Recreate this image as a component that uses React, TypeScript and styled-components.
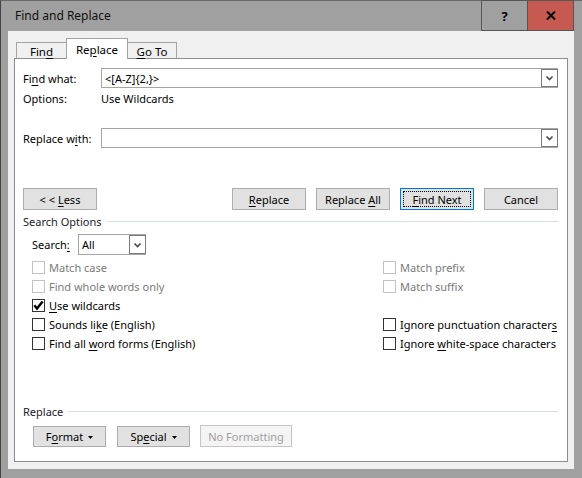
import React from 'react'
import styled, { createGlobalStyle } from 'styled-components'

const GlobalStyle = createGlobalStyle`
  html, body {
    margin: 0;
    padding: 0;
    background: #ffffff;
  }
  body {
    font-family: 'Noto Sans', 'Segoe UI', sans-serif;
    font-size: 11px;
    color: #000;
  }
`

const Window = styled.div`
  width: 582px;
  height: 478px;
  box-sizing: border-box;
  background: #a0a0a0;
  border-left: 1px solid #444;
  border-top: 1px solid #6a6a6a;
  padding: 0 8px 9px 7px;
  display: flex;
  flex-direction: column;
`

const TitleBar = styled.div`
  height: 30px;
  display: flex;
  align-items: stretch;
  padding-left: 7px;
`

const Title = styled.div`
  flex: 1;
  display: flex;
  align-items: center;
  font-size: 12px;
  color: #111;
  padding-bottom: 1px;
`

const CaptionButton = styled.div<{ $close?: boolean }>`
  width: ${p => (p.$close ? '46px' : '47px')};
  box-sizing: border-box;
  margin-top: -1px;
  background: ${p => (p.$close ? '#c75a50' : '#a0a0a0')};
  border: 1px solid #555;
  border-left: ${p => (p.$close ? 'none' : '1px solid #555')};
  display: flex;
  align-items: center;
  justify-content: center;
  font-weight: bold;
  font-size: 13px;
  color: #000;
`

const Client = styled.div`
  flex: 1;
  background: #f0f0f0;
  padding: 7px 6px 7px 6px;
  display: flex;
  flex-direction: column;
`

const TabStrip = styled.div`
  height: 20px;
  display: flex;
  align-items: flex-end;
  padding-left: 2px;
  position: relative;
  z-index: 1;
`

const Tab = styled.div<{ $active?: boolean; $w: number }>`
  width: ${p => p.$w}px;
  box-sizing: border-box;
  height: ${p => (p.$active ? '21px' : '16px')};
  margin-bottom: ${p => (p.$active ? '-1px' : '0')};
  margin-left: -1px;
  background: ${p => (p.$active ? '#fff' : '#f0f0f0')};
  border: 1px solid #a3a3a3;
  border-bottom: none;
  display: flex;
  align-items: center;
  justify-content: center;
  font-size: 11.5px;
  padding-top: ${p => (p.$active ? '0' : '2px')};
  &:first-child {
    margin-left: 0;
  }
`

const Panel = styled.div`
  flex: 1;
  background: #fff;
  border: 1px solid #898c92;
  padding: 0 9px 0 8px;
  display: flex;
  flex-direction: column;
`

const FieldRow = styled.div<{ $top: number; $h?: number }>`
  margin-top: ${p => p.$top}px;
  height: ${p => p.$h ?? 20}px;
  display: flex;
  align-items: center;
`

const Label = styled.div<{ $w?: number; $indent?: number }>`
  width: ${p => p.$w ?? 78}px;
  flex-shrink: 0;
  padding-left: ${p => p.$indent ?? 0}px;
  white-space: nowrap;
`

const Combo = styled.div<{ $w?: number }>`
  ${p => (p.$w ? `width: ${p.$w}px;` : 'flex: 1;')}
  height: 100%;
  box-sizing: border-box;
  border: 1px solid #a5a5a5;
  display: flex;
  align-items: center;
`

const ComboText = styled.div`
  flex: 1;
  padding-left: 3px;
  white-space: nowrap;
`

const DropBox = styled.div`
  width: 17px;
  height: 100%;
  box-sizing: border-box;
  margin-right: -1px;
  border: 1px solid #7a7a7a;
  background: #fff;
  display: flex;
  align-items: center;
  justify-content: center;
`

const ButtonRow = styled.div<{ $top: number; $indent?: number; $gap?: number }>`
  margin-top: ${p => p.$top}px;
  padding-left: ${p => p.$indent ?? 0}px;
  display: flex;
  align-items: flex-end;
  gap: ${p => p.$gap ?? 10}px;
`

const Spacer = styled.div`
  flex: 1;
`

const Button = styled.div<{ $w?: number; $h?: number; $focus?: boolean; $disabled?: boolean }>`
  width: ${p => p.$w ?? 74}px;
  height: ${p => p.$h ?? 22}px;
  box-sizing: border-box;
  background: ${p => (p.$disabled ? '#f4f4f4' : '#e1e1e1')};
  border: 1px solid ${p => (p.$focus ? '#0078d7' : p.$disabled ? '#c5c5c5' : '#adadad')};
  color: ${p => (p.$disabled ? '#a0a0a0' : '#000')};
  display: flex;
  align-items: center;
  justify-content: center;
  white-space: nowrap;
  outline: ${p => (p.$focus ? '1px dotted #000' : 'none')};
  outline-offset: -4px;
`

const ButtonCaret = styled.span`
  display: inline-flex;
  margin-left: 5px;
  padding-top: 1px;
`

const GroupHeader = styled.div<{ $top: number }>`
  margin-top: ${p => p.$top}px;
  height: 18px;
  display: flex;
  align-items: center;
  gap: 5px;
  color: #1a1a2a;
  &::after {
    content: '';
    flex: 1;
    height: 1px;
    background: #d7dde3;
  }
`

const OptionGrid = styled.div`
  margin-top: 3px;
  padding-left: 9px;
  display: grid;
  grid-template-columns: 351px 1fr;
  grid-auto-rows: 19px;
`

const Option = styled.div<{ $disabled?: boolean }>`
  display: flex;
  align-items: center;
  gap: 4px;
  color: ${p => (p.$disabled ? '#7a7a7a' : '#000')};
  white-space: nowrap;
`

const Box = styled.div<{ $disabled?: boolean }>`
  width: 13px;
  height: 13px;
  box-sizing: border-box;
  border: 1px solid ${p => (p.$disabled ? '#c3c3c3' : '#333')};
  background: #fff;
  display: flex;
  align-items: center;
  justify-content: center;
`

const U = styled.span`
  text-decoration: underline;
  text-underline-offset: 2px;
`

const PanelFill = styled.div`
  flex: 1;
`

const Chevron = () => (
  <svg width="9" height="6" viewBox="0 0 9 6">
    <path d="M1.5 1.5 L4.5 4.5 L7.5 1.5" stroke="#4d4d4d" strokeWidth="1.7" fill="none" />
  </svg>
)

const Caret = () => (
  <ButtonCaret>
    <svg width="5" height="3" viewBox="0 0 5 3">
      <polygon points="0,0 5,0 2.5,3" fill="#000" />
    </svg>
  </ButtonCaret>
)

const Check = () => (
  <svg width="11" height="11" viewBox="0 0 11 11">
    <path d="M1.3 5.3 L4 8.6 L9.6 1.6" stroke="#000" strokeWidth="2.4" fill="none" />
  </svg>
)

const CloseGlyph = () => (
  <svg width="10" height="9" viewBox="0 0 10 9">
    <path d="M1 0.5 L9 8.5 M9 0.5 L1 8.5" stroke="#000" strokeWidth="2" />
  </svg>
)

type Opt = { label: React.ReactNode; disabled?: boolean; checked?: boolean } | null

const options: Opt[] = [
  { label: 'Match case', disabled: true },
  { label: 'Match prefix', disabled: true },
  { label: 'Find whole words only', disabled: true },
  { label: 'Match suffix', disabled: true },
  { label: <><U>U</U>se wildcards</>, checked: true },
  null,
  { label: <>Sounds li<U>k</U>e (English)</> },
  { label: <>Ignore punctuation character<U>s</U></> },
  { label: <>Find all <U>w</U>ord forms (English)</> },
  { label: <>Ignore <U>w</U>hite-space characters</> },
]

export default function App() {
  return (
    <>
      <GlobalStyle />
      <Window>
        <TitleBar>
          <Title>Find and Replace</Title>
          <CaptionButton>?</CaptionButton>
          <CaptionButton $close>
            <CloseGlyph />
          </CaptionButton>
        </TitleBar>
        <Client>
          <TabStrip>
            <Tab $w={51}><span>Fin<U>d</U></span></Tab>
            <Tab $w={62} $active><span>Re<U>p</U>lace</span></Tab>
            <Tab $w={50}><span><U>G</U>o To</span></Tab>
          </TabStrip>
          <Panel>
            <FieldRow $top={9}>
              <Label>Fi<U>n</U>d what:</Label>
              <Combo>
                <ComboText>&lt;[A-Z]{'{2,}'}&gt;</ComboText>
                <DropBox><Chevron /></DropBox>
              </Combo>
            </FieldRow>
            <FieldRow $top={0}>
              <Label>Options:</Label>
              <div>Use Wildcards</div>
            </FieldRow>
            <FieldRow $top={20}>
              <Label>Replace w<U>i</U>th:</Label>
              <Combo>
                <ComboText />
                <DropBox><Chevron /></DropBox>
              </Combo>
            </FieldRow>

            <ButtonRow $top={40}>
              <Button><span>&lt; &lt; <U>L</U>ess</span></Button>
              <Spacer />
              <Button><span><U>R</U>eplace</span></Button>
              <Button><span>Replace <U>A</U>ll</span></Button>
              <Button $focus><span><U>F</U>ind Next</span></Button>
              <Button><span>Cancel</span></Button>
            </ButtonRow>

            <GroupHeader $top={2}>Search Options</GroupHeader>
            <FieldRow $top={4} $h={21}>
              <Label $w={46} $indent={9}>Search<U>:</U></Label>
              <Combo $w={68}>
                <ComboText>All</ComboText>
                <DropBox><Chevron /></DropBox>
              </Combo>
            </FieldRow>

            <OptionGrid>
              {options.map((o, i) =>
                o ? (
                  <Option key={i} $disabled={o.disabled}>
                    <Box $disabled={o.disabled}>{o.checked && <Check />}</Box>
                    <span>{o.label}</span>
                  </Option>
                ) : (
                  <div key={i} />
                ),
              )}
            </OptionGrid>

            <GroupHeader $top={49}>Replace</GroupHeader>
            <ButtonRow $top={5} $indent={10} $gap={11}>
              <Button $w={73} $h={21}><span>F<U>o</U>rmat</span><Caret /></Button>
              <Button $w={73} $h={21}><span>Sp<U>e</U>cial</span><Caret /></Button>
              <Button $w={92} $disabled style={{ marginLeft: -1 }}><span>No Formatting</span></Button>
            </ButtonRow>
            <PanelFill />
          </Panel>
        </Client>
      </Window>
    </>
  )
}
